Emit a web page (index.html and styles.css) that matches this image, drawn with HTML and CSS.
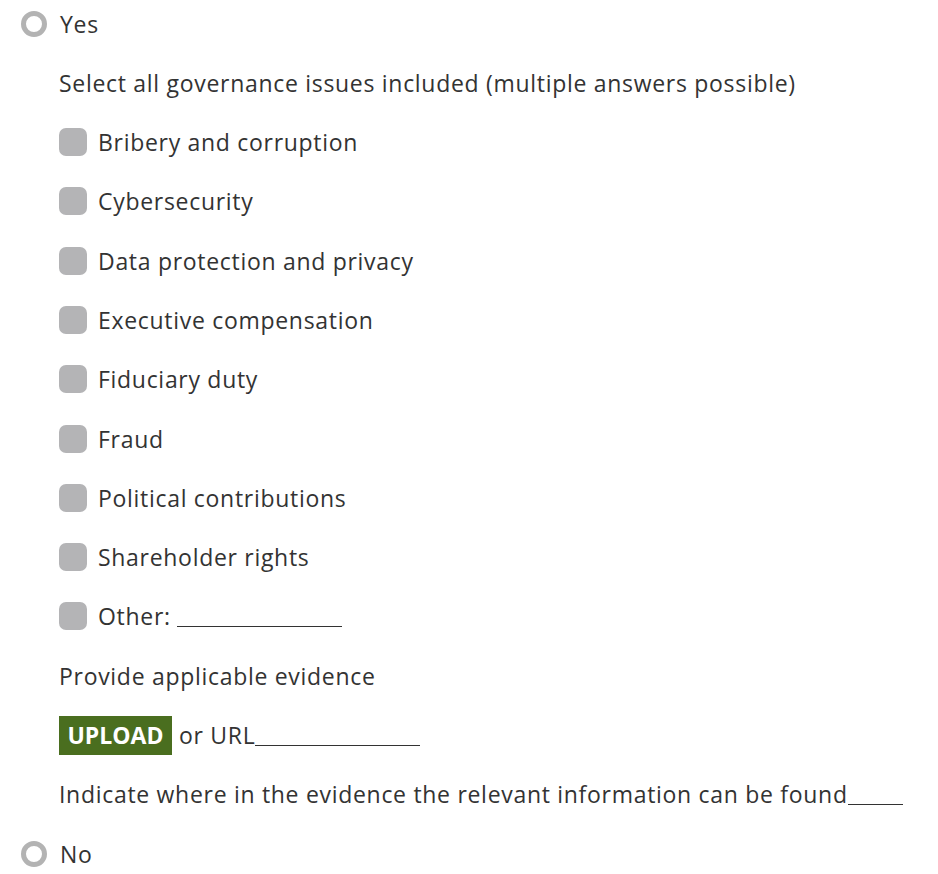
FILE: index.html
```html
<!DOCTYPE html>
<html>
<head>
<meta charset="utf-8">
<link rel="stylesheet" href="styles.css">
</head>
<body>
<div class="form">
  <div class="row">
    <span class="radio"></span>
    <span class="label">Yes</span>
  </div>
  <div class="sub">
    <div class="row"><span class="label">Select all governance issues included (multiple answers possible)</span></div>
    <div class="row"><span class="check"></span><span class="label">Bribery and corruption</span></div>
    <div class="row"><span class="check"></span><span class="label">Cybersecurity</span></div>
    <div class="row"><span class="check"></span><span class="label">Data protection and privacy</span></div>
    <div class="row"><span class="check"></span><span class="label">Executive compensation</span></div>
    <div class="row"><span class="check"></span><span class="label">Fiduciary duty</span></div>
    <div class="row"><span class="check"></span><span class="label">Fraud</span></div>
    <div class="row"><span class="check"></span><span class="label">Political contributions</span></div>
    <div class="row"><span class="check"></span><span class="label">Shareholder rights</span></div>
    <div class="row"><span class="check"></span><span class="label">Other: <span class="blank blank-lg"></span></span></div>
    <div class="row"><span class="label">Provide applicable evidence</span></div>
    <div class="row"><span class="upload">UPLOAD</span><span class="label">or URL<span class="blank blank-lg"></span></span></div>
    <div class="row"><span class="label">Indicate where in the evidence the relevant information can be found<span class="blank blank-sm"></span></span></div>
  </div>
  <div class="row">
    <span class="radio"></span>
    <span class="label">No</span>
  </div>
</div>
</body>
</html>
```
FILE: styles.css
```css
html, body {
  margin: 0;
  padding: 0;
  background: #ffffff;
}
body {
  font-family: "Open Sans", "Noto Sans", sans-serif;
  font-size: 23px;
  letter-spacing: 0.7px;
  color: #333333;
}
.form {
  display: flex;
  flex-direction: column;
  gap: 27.3px;
  padding: 7.5px 0 0 21px;
}
.sub {
  display: flex;
  flex-direction: column;
  gap: 27.3px;
  padding-left: 38px;
}
.row {
  height: 32px;
  display: flex;
  align-items: center;
}
.radio {
  box-sizing: border-box;
  width: 26px;
  height: 26px;
  border: 5px solid #b3b3b3;
  border-radius: 50%;
  margin-right: 13px;
  flex: none;
}
.check {
  width: 28px;
  height: 28px;
  border-radius: 7px;
  background: #b4b4b6;
  margin-right: 11px;
  flex: none;
}
.label {
  white-space: nowrap;
  line-height: 32px;
}
.blank {
  display: inline-block;
  border-bottom: 1.5px solid #333333;
  vertical-align: -2px;
  height: 0;
}
.blank-lg { width: 165px; }
.blank-sm { width: 55px; }
.upload {
  background: #4a6e1f;
  color: #ffffff;
  font-weight: 700;
  letter-spacing: 0;
  padding: 0 6px;
  height: 39px;
  line-height: 39px;
  margin-right: 7px;
  flex: none;
  width: 101px;
  text-align: center;
}
```
